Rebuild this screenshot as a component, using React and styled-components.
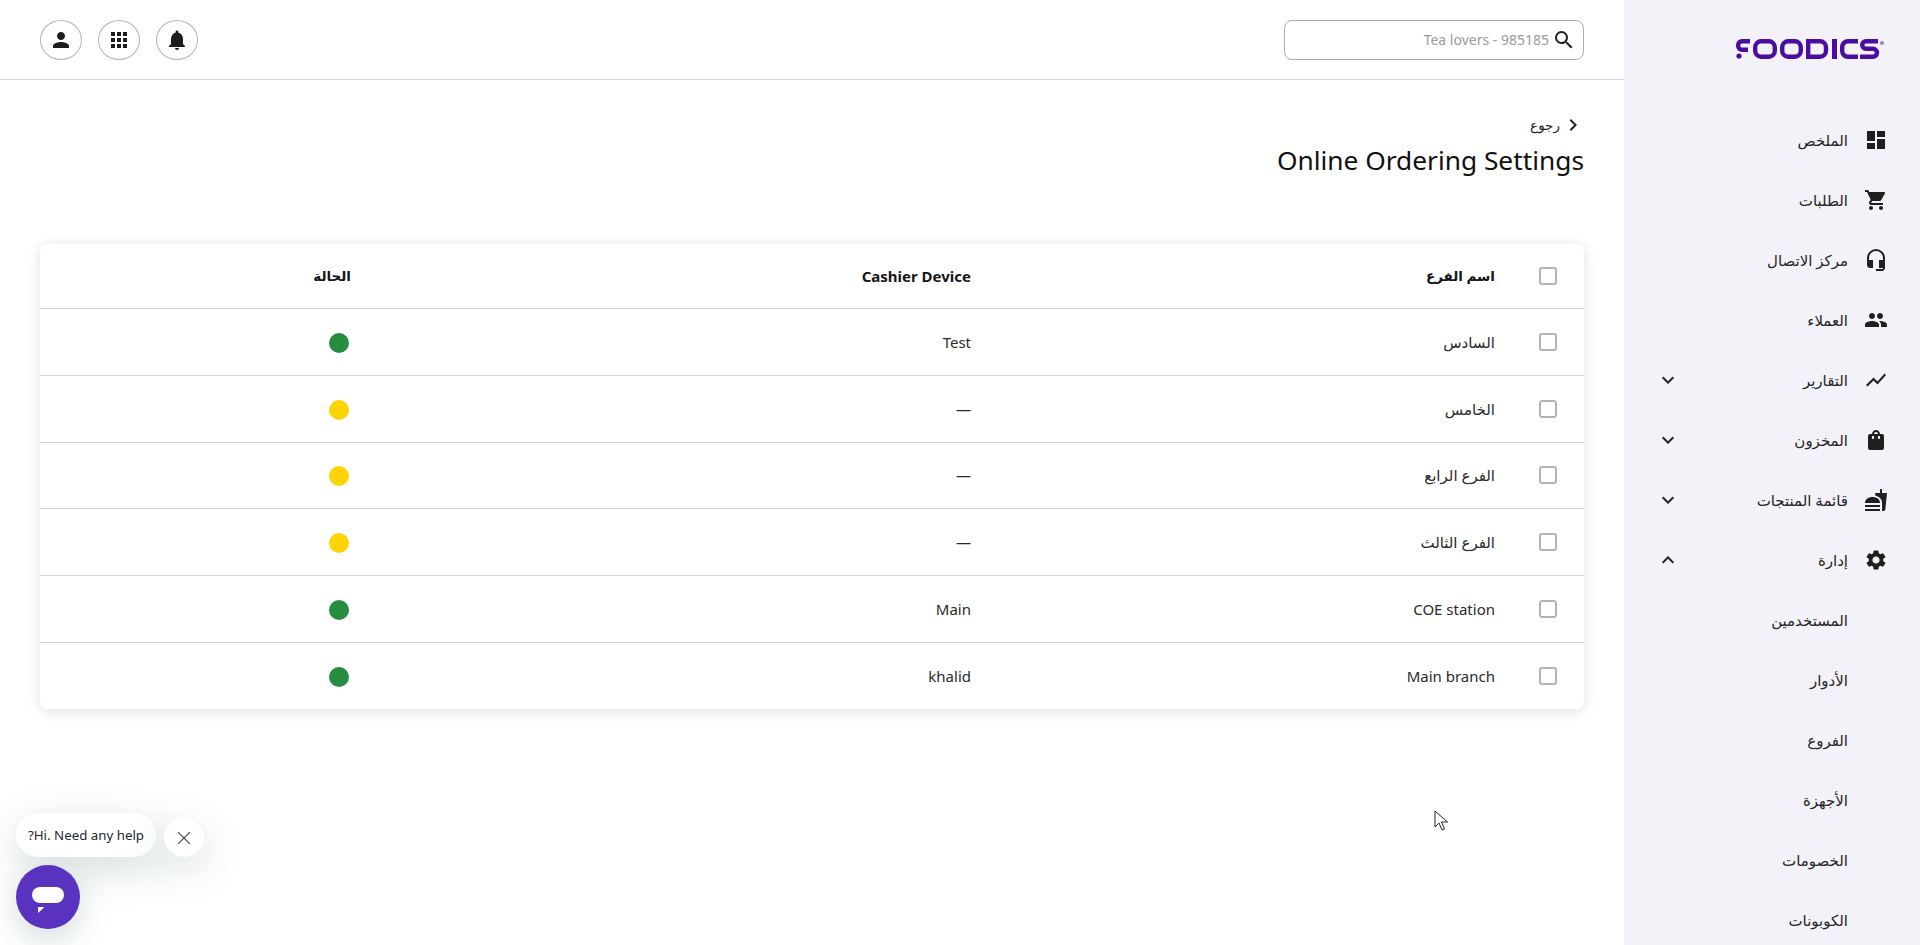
import React from "react";
import styled, { createGlobalStyle } from "styled-components";
import {
  MdDashboard, MdShoppingCart, MdHeadsetMic, MdPeople, MdShowChart, MdShoppingBag,
  MdFastfood, MdSettings, MdExpandMore, MdExpandLess, MdPerson, MdApps,
  MdNotifications, MdSearch, MdChevronRight,
} from "react-icons/md";
import { X } from "lucide-react";

const Global = createGlobalStyle`
  html, body { margin: 0; padding: 0; height: 945px; overflow: hidden; background: #fff; }
  body { font-family: "Noto Sans", "DejaVu Sans", sans-serif; color: #1f1f1f; }
  * { box-sizing: border-box; }
`;
const Shell = styled.div`display: flex; direction: rtl; height: 945px; overflow: hidden; position: relative;`;
const Sidebar = styled.aside`width: 296px; flex: none; background: #f2f2f8; height: 945px; overflow: hidden;`;
const LogoBar = styled.div`height: 80px; padding: 39px 36px 0 0; display: flex; align-items: flex-start;`;
const Nav = styled.nav`display: flex; flex-direction: column; padding-top: 30px;`;
const NavItem = styled.div`
  height: 60px; display: flex; align-items: center; padding-right: ${p => p.$sub ? "72px" : "32px"};
  font-size: 15px; color: #262626;
`;
const NavIcon = styled.span`width: 24px; height: 24px; margin-left: 16px; display: flex; color: #1f1f1f; font-size: 24px;`;
const NavChevron = styled.span`margin-right: auto; margin-left: 32px; display: flex; font-size: 24px; color: #222;`;
const Main = styled.main`flex: 1; min-width: 0;`;
const Header = styled.header`
  height: 80px; border-bottom: 1px solid #d4d4d4; padding: 0 40px; display: flex;
  align-items: center; justify-content: space-between;
`;
const Search = styled.div`
  width: 300px; height: 40px; border: 1px solid #adadad; border-radius: 8px; display: flex;
  align-items: center; padding: 0 7px; gap: 3px; color: #1f1f1f; font-size: 24px;
`;
const SearchText = styled.span`font-size: 14px; color: #9a9aa2;`;
const HeaderButtons = styled.div`display: flex; flex-direction: row-reverse; gap: 16px;`;
const RoundButton = styled.button`
  width: 42px; height: 40px; padding: 0; border-radius: 50%; border: 1px solid #b4b4b4; background: #fff;
  display: flex; align-items: center; justify-content: center; color: #1c1c1c; font-size: 24px;
`;
const Content = styled.div`padding: 33px 40px 0;`;
const Back = styled.div`display: flex; align-items: center; height: 24px; font-size: 13.5px; gap: 1px; color: #222;`;
const BackIcon = styled.span`display: flex; font-size: 24px; margin-right: -1px;`;
const Title = styled.h1`margin: 5px 0 0; font-size: 26.3px; font-weight: 400; line-height: 36px; color: #111; direction: ltr; text-align: right;`;
const Card = styled.section`
  margin-top: 66px; background: #fff; border-radius: 8px; box-shadow: 0 2px 14px rgba(0,0,0,.13);
  overflow: hidden;
`;
const Row = styled.div`
  display: grid; grid-template-columns: 89px 524px 620px 1fr; align-items: center;
  height: ${p => p.$head ? "64px" : "66.8px"}; font-size: 15px; color: #2a2a2a;
  font-weight: ${p => p.$head ? 700 : 400};
  & + & { border-top: 1px solid #d3d3d8; }
`;
const CheckCell = styled.div`padding-right: 27px; display: flex;`;
const Check = styled.span`width: 18px; height: 18px; border: 2px solid #b4b4b4; border-radius: 3px; display: block; background: #fff;`;
const Cell = styled.div`color: ${p => p.$head ? "#161616" : "#2a2a2a"};`;
const ArabicHead = styled(Cell)`font-size: 13.5px;`;
const Latin = styled.span`direction: ltr; unicode-bidi: isolate;`;
const Dot = styled.span`display: block; width: 20px; height: 20px; border-radius: 50%; margin: 2px 2px 0 0; background: ${p => p.$on ? "#258c40" : "#ffd407"};`;
const ChatLayer = styled.div`position: absolute; left: 16px; bottom: 16px; width: 190px; height: 116px; direction: ltr;`;
const Bubble = styled.div`
  position: absolute; left: 0; top: 0; width: 140px; height: 44px; border-radius: 22px; background: #fff;
  box-shadow: 0 12px 40px rgba(40,80,80,.2); display: flex; align-items: center; justify-content: center;
  font-size: 13.3px; color: #1b2733;
`;
const CloseChat = styled.div`
  position: absolute; left: 148px; top: 5px; width: 40px; height: 39px; border-radius: 50%; background: #fff;
  box-shadow: 0 12px 40px rgba(40,80,80,.2); display: flex; align-items: center; justify-content: center;
  color: #555;
`;
const Fab = styled.div`
  position: absolute; left: 0; top: 52px; width: 64px; height: 64px; border-radius: 50%; background: #5a32c0;
  box-shadow: 0 10px 32px rgba(40,80,80,.2); display: flex; align-items: center; justify-content: center;
  padding-top: 6px;
`;
const Cursor = styled.svg`position: absolute; left: 1434px; top: 810px;`;

const Logo = () => (
  <svg width="148" height="20" viewBox="0 0 148 20" role="img" aria-label="Foodics logo">
    <g fill="none" stroke="#4a0d9f" strokeWidth="4.4">
      <path d="M14 2.200H6a3.800 3.800 0 0 0-3.800 3.800v1a3.800 3.800 0 0 0 3.800 3.800H12" />
      <rect x="19.200" y="2.200" width="19.600" height="15.600" rx="6" />
      <rect x="46.200" y="2.200" width="18.600" height="15.600" rx="6" />
      <path d="M72.200 2.200H84a6 6 0 0 1 6 6v3.600a6 6 0 0 1-6 6H72.200Z" />
      <path d="M98.500 0v20" strokeWidth="5" />
      <path d="M122 2.200H112a5.800 5.800 0 0 0-5.800 5.800v4a5.800 5.800 0 0 0 5.800 5.800H122" />
      <path d="M142 2.200H130a3.800 3.800 0 0 0 0 7.600h7a4 4 0 0 1 0 8H124" />
    </g>
    <circle cx="3" cy="17" r="2.600" fill="#4a0d9f" />
    <circle cx="146" cy="4" r="2" fill="#9a7fcc" />
  </svg>
);

const items = [
  ["الملخص", MdDashboard], ["الطلبات", MdShoppingCart], ["مركز الاتصال", MdHeadsetMic], ["العملاء", MdPeople],
  ["التقارير", MdShowChart, MdExpandMore], ["المخزون", MdShoppingBag, MdExpandMore],
  ["قائمة المنتجات", MdFastfood, MdExpandMore], ["إدارة", MdSettings, MdExpandLess],
];
const subs = ["المستخدمين", "الأدوار", "الفروع", "الأجهزة", "الخصومات", "الكوبونات"];
const rows = [
  ["السادس", "Test", true], ["الخامس", "—", false], ["الفرع الرابع", "—", false],
  ["الفرع الثالث", "—", false], ["COE station", "Main", true], ["Main branch", "khalid", true],
];

export default function App() {
  return (
    <Shell>
      <Global />
      <Sidebar>
        <LogoBar><Logo /></LogoBar>
        <Nav>
          {items.map(([label, Icon, Chevron]) => (
            <NavItem key={label}>
              <NavIcon><Icon /></NavIcon>
              {label}
              {Chevron && <NavChevron><Chevron /></NavChevron>}
            </NavItem>
          ))}
          {subs.map(s => <NavItem key={s} $sub>{s}</NavItem>)}
        </Nav>
      </Sidebar>
      <Main>
        <Header>
          <Search><MdSearch /><SearchText dir="ltr">Tea lovers - 985185</SearchText></Search>
          <HeaderButtons>
            <RoundButton><MdPerson /></RoundButton>
            <RoundButton><MdApps /></RoundButton>
            <RoundButton><MdNotifications /></RoundButton>
          </HeaderButtons>
        </Header>
        <Content>
          <Back><BackIcon><MdChevronRight /></BackIcon>رجوع</Back>
          <Title>Online Ordering Settings</Title>
          <Card>
            <Row $head>
              <CheckCell><Check /></CheckCell>
              <ArabicHead $head>اسم الفرع</ArabicHead>
              <Cell $head>Cashier Device</Cell>
              <ArabicHead $head>الحالة</ArabicHead>
            </Row>
            {rows.map(([name, device, on]) => (
              <Row key={name}>
                <CheckCell><Check /></CheckCell>
                <Cell>{name}</Cell>
                <Cell><Latin>{device}</Latin></Cell>
                <Cell><Dot $on={on} /></Cell>
              </Row>
            ))}
          </Card>
        </Content>
      </Main>
      <ChatLayer>
        <Bubble>?Hi. Need any help</Bubble>
        <CloseChat><X size={22} strokeWidth={1.25} /></CloseChat>
        <Fab>
          <svg width="32" height="26" viewBox="0 0 32 26">
            <rect x="0" y="0" width="32" height="16" rx="8" fill="#fff" />
            <path d="M6 20h6.500L6 26z" fill="#fff" />
          </svg>
        </Fab>
      </ChatLayer>
      <Cursor width="16" height="22" viewBox="0 0 16 22">
        <path d="M1 1v16l4-4 3 7 2.500-1-3-7h6z" fill="#fff" stroke="#222" strokeWidth="1" />
      </Cursor>
    </Shell>
  );
}
